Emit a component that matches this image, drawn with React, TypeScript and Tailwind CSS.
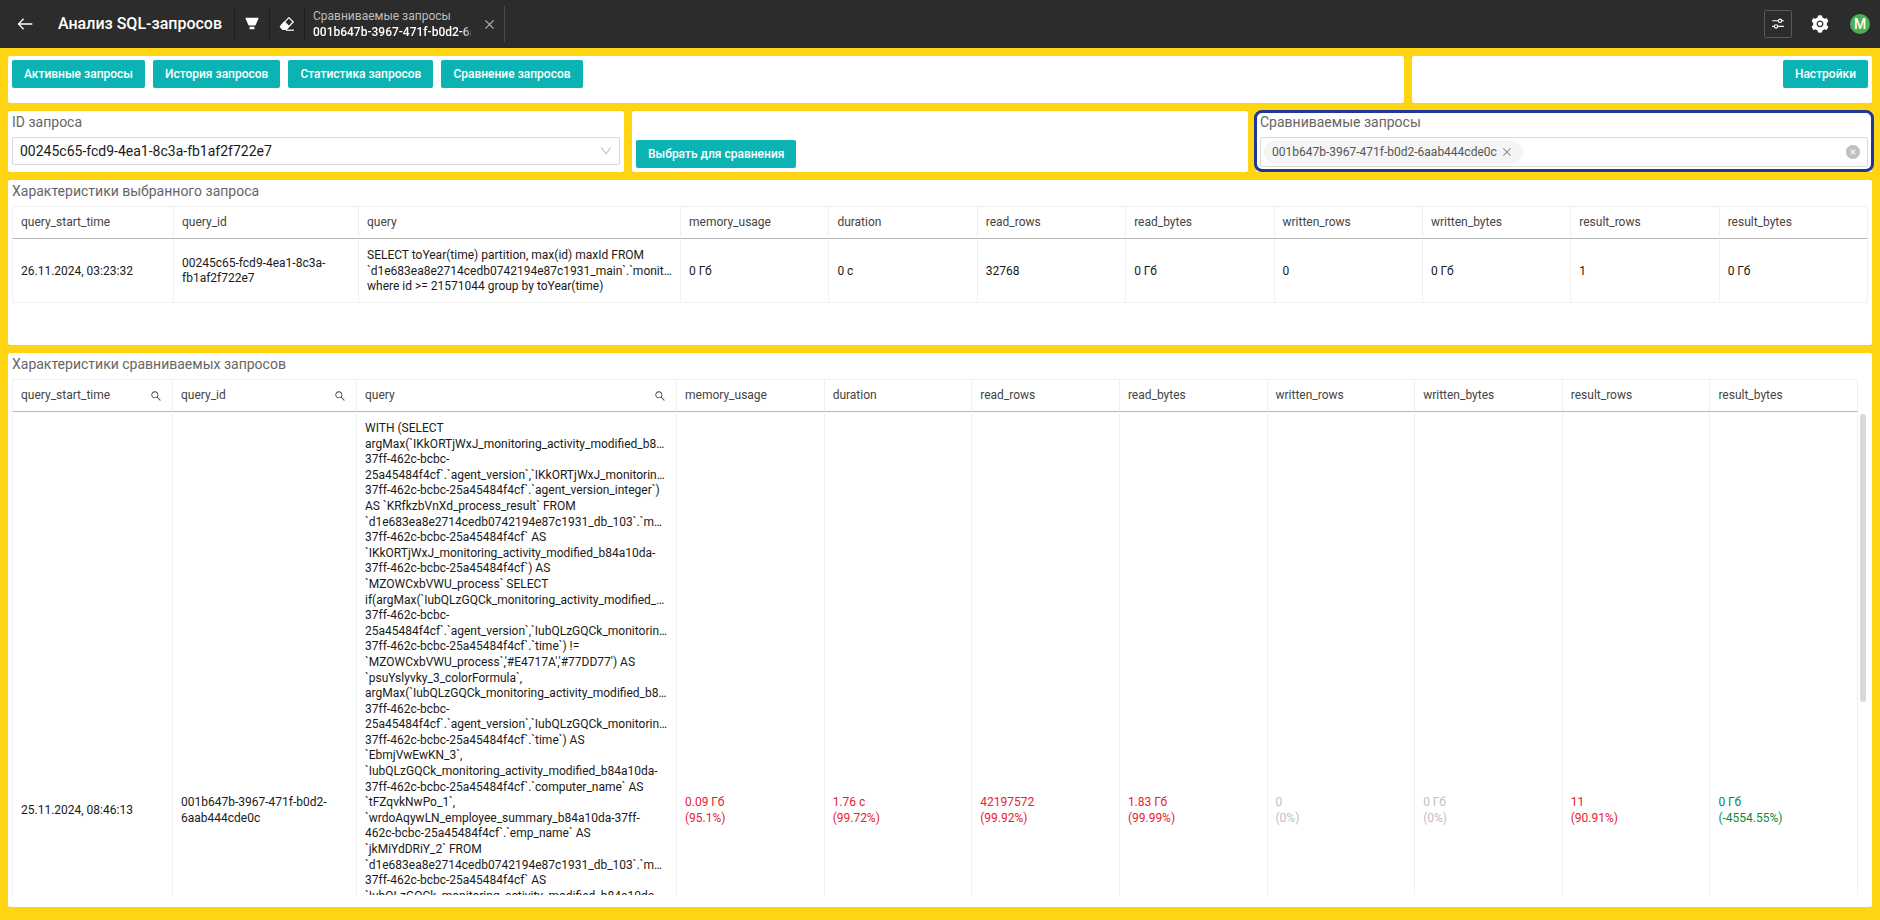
import type { ReactNode } from 'react';
import { AiFillCloseCircle, AiFillSetting, AiOutlineClose, AiOutlineDown, AiOutlineSearch } from 'react-icons/ai';

type Column = { name: string; width?: string; searchable?: boolean };

const METRICS = [
  'memory_usage',
  'duration',
  'read_rows',
  'read_bytes',
  'written_rows',
  'written_bytes',
  'result_rows',
  'result_bytes',
];

const SELECTED_COLUMNS: Column[] = [
  { name: 'query_start_time', width: 'w-[162px]' },
  { name: 'query_id', width: 'w-[185px]' },
  { name: 'query', width: 'w-[322px]' },
  ...METRICS.map((name) => ({ name })),
];

const COMPARED_COLUMNS: Column[] = [
  { name: 'query_start_time', width: 'w-[161px]', searchable: true },
  { name: 'query_id', width: 'w-[184px]', searchable: true },
  { name: 'query', width: 'w-[320px]', searchable: true },
  ...METRICS.map((name) => ({ name })),
];

const SELECTED_QUERY = [
  'SELECT toYear(time) partition, max(id) maxId FROM',
  '`d1e683ea8e2714cedb0742194e87c1931_main`.`monit…',
  'where id >= 21571044 group by toYear(time)',
];

const SELECTED_VALUES = ['0 Гб', '0 с', '32768', '0 Гб', '0', '0 Гб', '1', '0 Гб'];

const COMPARED_QUERY = [
  'WITH (SELECT',
  'argMax(`IKkORTjWxJ_monitoring_activity_modified_b8…',
  '37ff-462c-bcbc-',
  '25a45484f4cf`.`agent_version`,`IKkORTjWxJ_monitorin…',
  '37ff-462c-bcbc-25a45484f4cf`.`agent_version_integer`)',
  'AS `KRfkzbVnXd_process_result` FROM',
  '`d1e683ea8e2714cedb0742194e87c1931_db_103`.`m…',
  '37ff-462c-bcbc-25a45484f4cf` AS',
  '`IKkORTjWxJ_monitoring_activity_modified_b84a10da-',
  '37ff-462c-bcbc-25a45484f4cf`) AS',
  '`MZOWCxbVWU_process` SELECT',
  'if(argMax(`IubQLzGQCk_monitoring_activity_modified_…',
  '37ff-462c-bcbc-',
  '25a45484f4cf`.`agent_version`,`IubQLzGQCk_monitorin…',
  '37ff-462c-bcbc-25a45484f4cf`.`time`) !=',
  "`MZOWCxbVWU_process`,'#E4717A','#77DD77') AS",
  '`psuYslyvky_3_colorFormula`,',
  'argMax(`IubQLzGQCk_monitoring_activity_modified_b8…',
  '37ff-462c-bcbc-',
  '25a45484f4cf`.`agent_version`,`IubQLzGQCk_monitorin…',
  '37ff-462c-bcbc-25a45484f4cf`.`time`) AS',
  '`EbmjVwEwKN_3`,',
  '`IubQLzGQCk_monitoring_activity_modified_b84a10da-',
  '37ff-462c-bcbc-25a45484f4cf`.`computer_name` AS',
  '`tFZqvkNwPo_1`,',
  '`wrdoAqywLN_employee_summary_b84a10da-37ff-',
  '462c-bcbc-25a45484f4cf`.`emp_name` AS',
  '`jkMiYdDRiY_2` FROM',
  '`d1e683ea8e2714cedb0742194e87c1931_db_103`.`m…',
  '37ff-462c-bcbc-25a45484f4cf` AS',
  '`IubQLzGQCk_monitoring_activity_modified_b84a10da-',
];

const COMPARED_VALUES = [
  { value: '0.09 Гб', delta: '(95.1%)', color: 'text-[#e8202f]' },
  { value: '1.76 с', delta: '(99.72%)', color: 'text-[#e8202f]' },
  { value: '42197572', delta: '(99.92%)', color: 'text-[#e8202f]' },
  { value: '1.83 Гб', delta: '(99.99%)', color: 'text-[#e8202f]' },
  { value: '0', delta: '(0%)', color: 'text-[#bfbfbf]' },
  { value: '0 Гб', delta: '(0%)', color: 'text-[#bfbfbf]' },
  { value: '11', delta: '(90.91%)', color: 'text-[#e8202f]' },
  { value: '0 Гб', delta: '(-4554.55%)', color: 'text-[#0e8a3a]' },
];

function ActionButton({ children }: { children: ReactNode }) {
  return (
    <button type="button" className="h-7 rounded-xs bg-[#0cb3b3] px-3 text-xs font-medium whitespace-nowrap text-white">
      {children}
    </button>
  );
}

function Panel({ className = '', children }: { className?: string; children?: ReactNode }) {
  return <section className={`min-w-0 rounded-xs bg-white px-1 ${className}`}>{children}</section>;
}

function TableHead({ columns }: { columns: Column[] }) {
  return (
    <thead>
      <tr>
        {columns.map((column) => (
          <th
            key={column.name}
            scope="col"
            className={`h-[33px] border-t border-r border-b border-t-[#f0f0f0] border-r-[#f0f0f0] border-b-[#b8b8b8] px-2 text-left font-normal text-[#444] first:border-l first:border-l-[#f0f0f0] ${column.width ?? ''}`}
          >
            <div className="flex items-center justify-between">
              <span>{column.name}</span>
              {column.searchable && (
                <button type="button" aria-label={`Поиск: ${column.name}`} className="mr-0.5 text-[#444]">
                  <AiOutlineSearch className="size-3" />
                </button>
              )}
            </div>
          </th>
        ))}
      </tr>
    </thead>
  );
}

const CELL = 'border-r border-b border-[#f0f0f0] px-2 pt-[9px] pb-[7px] first:border-l';

function Lines({ lines }: { lines: string[] }) {
  return (
    <>
      {lines.map((line, index) => (
        <div key={index} className="whitespace-nowrap">
          {line}
        </div>
      ))}
    </>
  );
}

function TopBar() {
  return (
    <header className="flex h-12 shrink-0 items-center bg-[#2c2c2c] pr-[10px] text-white">
      <button type="button" aria-label="Назад" className="ml-[17px] mr-[25px] size-4">
        <svg viewBox="0 0 16 16" className="size-4" fill="none" stroke="currentColor" strokeWidth="1.3">
          <path d="M15.3 8H1.5M6.6 2.8 1.5 8l5.1 5.2" />
        </svg>
      </button>
      <h1 className="mr-3 text-base font-medium">Анализ SQL-запросов</h1>
      <button type="button" aria-label="Фильтр" className="flex h-9 w-[35px] items-center justify-center border-l border-[#1f1f1f]">
        <svg viewBox="0 0 14 14" className="size-[14px]" fill="currentColor">
          <path d="M.6.8h12.8v1L10.4 8.6H3.6L.6 1.8zM4.6 9.8h4.8v2.4H4.6z" />
        </svg>
      </button>
      <button type="button" aria-label="Очистить" className="flex h-9 w-[35px] items-center justify-center border-l border-[#1f1f1f]">
        <svg viewBox="0 0 16 16" className="size-4" fill="none" stroke="currentColor" strokeWidth="1.2" strokeLinejoin="round">
          <path d="M9.9 1.7 14.2 6 7 13.4H4L1.4 10.6z" />
          <path d="M5.4 6 9.9 10.5 7 13.4H4L1.4 10.6z" fill="currentColor" />
          <path d="M7 14.2h8" />
        </svg>
      </button>
      <div className="flex h-9 items-center border-x border-l-[#1f1f1f] border-r-[#4a4a4a] pl-2">
        <div className="w-[158px] text-xs leading-4">
          <div className="text-[#bdbdbd]">Сравниваемые запросы</div>
          <div className="overflow-hidden mask-r-from-[148px] mask-r-to-[164px] font-medium whitespace-nowrap">001b647b-3967-471f-b0d2-6aab444cde0c</div>
        </div>
        <button type="button" aria-label="Сбросить фильтр" className="ml-3 pr-2 text-[#bdbdbd]">
          <AiOutlineClose className="size-[13px]" />
        </button>
      </div>
      <div className="ml-auto flex items-center">
        <button type="button" aria-label="Параметры" className="flex size-7 items-center justify-center rounded-xs border border-[#595959]">
          <svg viewBox="0 0 12 12" className="size-3" fill="none" stroke="currentColor" strokeWidth="1.1">
            <path d="M.2 2.8h6M9.8 2.8h2M.2 8.4h2M5.8 8.4h6" />
            <circle cx="8" cy="2.8" r="1.7" />
            <circle cx="4" cy="8.4" r="1.7" />
          </svg>
        </button>
        <button type="button" aria-label="Настройки системы" className="ml-[18px]">
          <AiFillSetting className="size-5" />
        </button>
        <button type="button" className="ml-5 size-5 rounded-full bg-[#4caf50] text-sm font-medium leading-5">
          M
        </button>
      </div>
    </header>
  );
}

export default function App() {
  return (
    <div className="flex h-screen flex-col bg-[#ffd412] font-['Roboto','Liberation_Sans',sans-serif] text-[#1a1a1a]">
      <TopBar />
      <main className="flex min-h-0 flex-1 flex-col gap-2 px-2 pt-2 pb-[13px]">
        <div className="grid shrink-0 grid-cols-[349fr_115fr] gap-2">
          <Panel className="flex min-h-[47px] items-start gap-2 pt-1">
            <ActionButton>Активные запросы</ActionButton>
            <ActionButton>История запросов</ActionButton>
            <ActionButton>Статистика запросов</ActionButton>
            <ActionButton>Сравнение запросов</ActionButton>
          </Panel>
          <Panel className="flex items-start justify-end pt-1">
            <ActionButton>Настройки</ActionButton>
          </Panel>
        </div>

        <div className="grid min-h-[61px] shrink-0 grid-cols-3 gap-2">
          <Panel>
            <label htmlFor="query-id" className="mb-1 block text-sm leading-[22px] text-[#666]">
              ID запроса
            </label>
            <div className="relative">
              <select id="query-id" className="block h-7 w-full appearance-none rounded-xs border border-[#d9d9d9] bg-white px-[7px] text-sm">
                <option>00245c65-fcd9-4ea1-8c3a-fb1af2f722e7</option>
              </select>
              <AiOutlineDown className="pointer-events-none absolute top-[7px] right-[7px] size-[14px] text-[#bfbfbf]" />
            </div>
          </Panel>
          <Panel className="flex items-end pb-1">
            <ActionButton>Выбрать для сравнения</ActionButton>
          </Panel>
          <Panel className="relative">
            <h2 className="mb-1 text-sm leading-[22px] text-[#666]">Сравниваемые запросы</h2>
            <div className="flex h-[30px] items-center justify-between rounded-xs border border-[#d9d9d9] pr-[6px] pl-[3px]">
              <span className="flex h-[22px] items-center gap-1 rounded-full border border-[#f0f0f0] bg-[#f5f5f5] pr-[9px] pl-[7px] text-xs text-[#555]">
                001b647b-3967-471f-b0d2-6aab444cde0c
                <button type="button" aria-label="Убрать запрос" className="text-[#888]">
                  <AiOutlineClose className="size-3" />
                </button>
              </span>
              <button type="button" aria-label="Очистить список" className="text-[#bfbfbf]">
                <AiFillCloseCircle className="size-4" />
              </button>
            </div>
            <div className="pointer-events-none absolute -inset-x-[2px] -top-px bottom-0 rounded-lg border-3 border-[#1e3799]" />
          </Panel>
        </div>

        <Panel className="min-h-[165px] shrink-0">
          <h2 className="mb-1 text-sm leading-[22px] text-[#666]">Характеристики выбранного запроса</h2>
          <table className="w-full table-fixed border-separate border-spacing-0 text-xs leading-[1.3]">
            <TableHead columns={SELECTED_COLUMNS} />
            <tbody>
              <tr>
                <td className={CELL}>26.11.2024, 03:23:32</td>
                <td className={CELL}>
                  <Lines lines={['00245c65-fcd9-4ea1-8c3a-', 'fb1af2f722e7']} />
                </td>
                <td className={CELL}>
                  <Lines lines={SELECTED_QUERY} />
                </td>
                {SELECTED_VALUES.map((value, index) => (
                  <td key={METRICS[index]} className={CELL}>
                    {value}
                  </td>
                ))}
              </tr>
            </tbody>
          </table>
        </Panel>

        <Panel className="flex min-h-0 flex-1 flex-col pb-3">
          <h2 className="mb-1 text-sm leading-[22px] text-[#666]">Характеристики сравниваемых запросов</h2>
          <div className="relative min-h-0 flex-1 overflow-hidden pr-[10px]">
            <table className="w-full table-fixed border-separate border-spacing-0 text-xs leading-[1.3]">
              <TableHead columns={COMPARED_COLUMNS} />
              <tbody>
                <tr className="h-[796px]">
                  <td className={CELL}>25.11.2024, 08:46:13</td>
                  <td className={CELL}>
                    <Lines lines={['001b647b-3967-471f-b0d2-', '6aab444cde0c']} />
                  </td>
                  <td className={`${CELL} align-top`}>
                    <Lines lines={COMPARED_QUERY} />
                  </td>
                  {COMPARED_VALUES.map((item, index) => (
                    <td key={METRICS[index]} className={`${CELL} ${item.color}`}>
                      {item.value}
                      <br />
                      {item.delta}
                    </td>
                  ))}
                </tr>
              </tbody>
            </table>
            <div className="absolute top-[35px] right-[2px] h-[288px] w-[6px] rounded-full bg-[#d9d9d9]" />
          </div>
        </Panel>
      </main>
    </div>
  );
}
